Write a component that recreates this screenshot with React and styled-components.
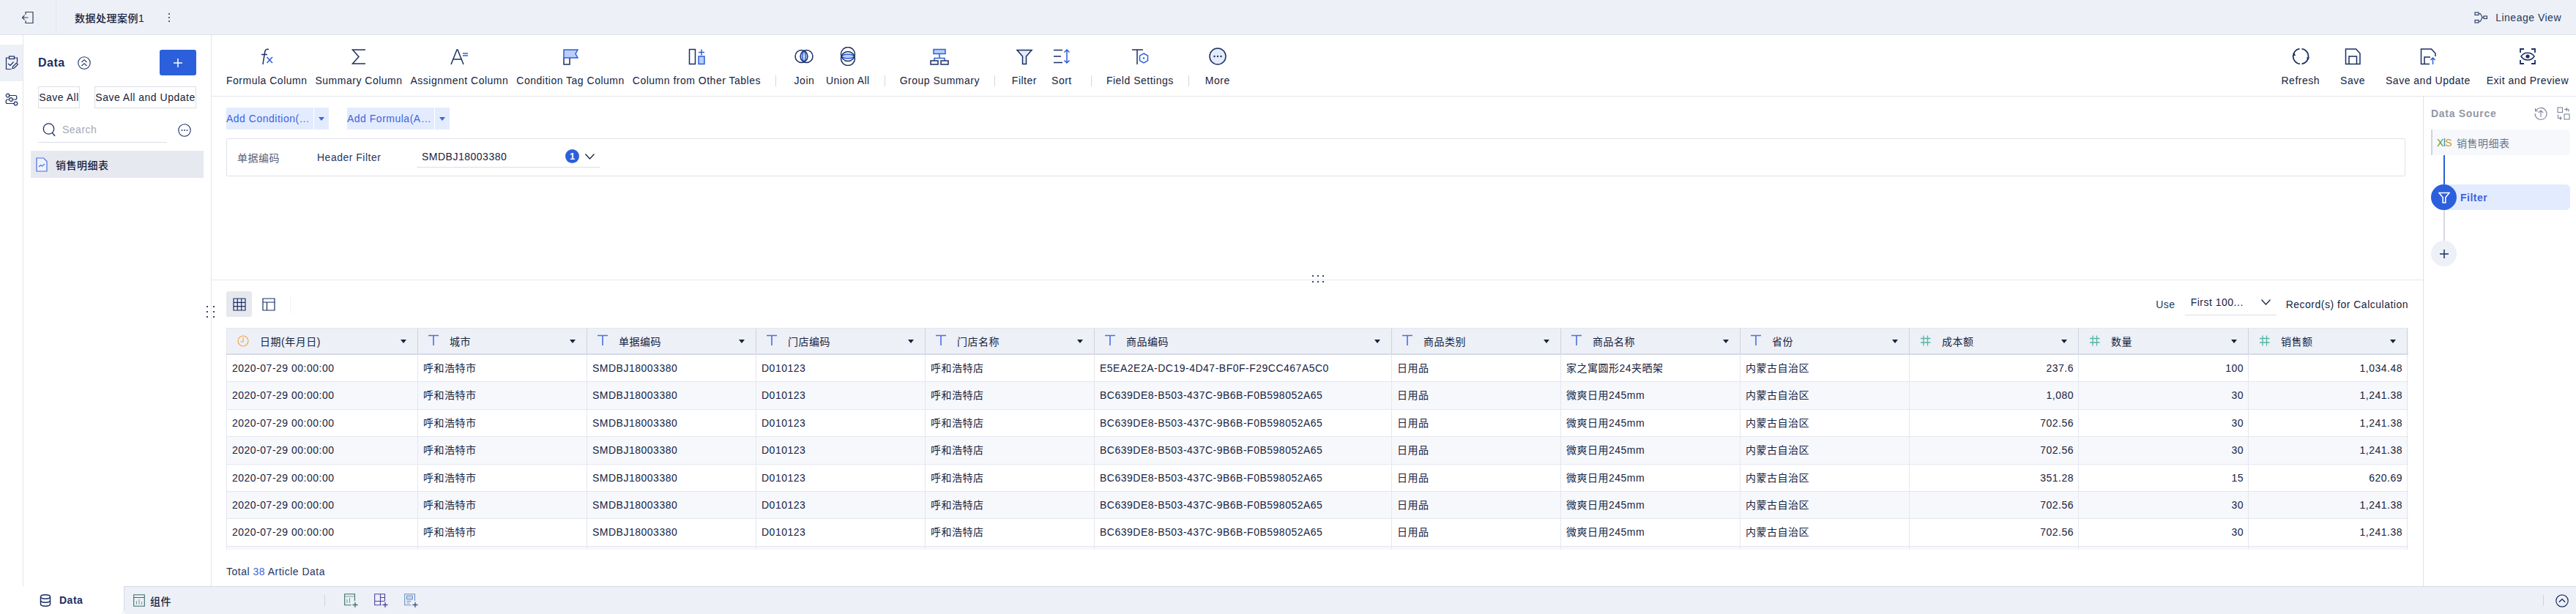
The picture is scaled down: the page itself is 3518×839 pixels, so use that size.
import { Fragment } from 'react';
import styled, { createGlobalStyle } from 'styled-components';

const NAVY = '#1b2f63';
const BLUE = '#2c5fdb';
const SOFT = '#b7cffb';
const PALE = '#e3ecfe';
const BAR = '#edf0f6';
const LINE = '#e2e5ec';
const GRID = '262px 231px 231px 231px 231px 406px 231px 245px 231px 231px 232px 217px';

const GlobalStyle = createGlobalStyle`
  html, body {
    margin: 0;
    padding: 0;
    background: #fff;
  }
  body {
    font-family: "Liberation Sans", "Noto Sans CJK SC", sans-serif;
    font-size: 14px;
    letter-spacing: 0.5px;
    color: #16233f;
  }
  * {
    box-sizing: border-box;
  }
`;

const Page = styled.div`
  display: flex;
  flex-direction: column;
  width: 3518px;
  height: 839px;
  overflow: hidden;
`;

const TopBar = styled.div`
  display: flex;
  align-items: center;
  flex: 0 0 48px;
  background: ${BAR};
  border-bottom: 1px solid #dfe2ea;
`;

const BackCell = styled.div`
  display: flex;
  align-items: center;
  justify-content: center;
  width: 77px;
  height: 47px;
  border-right: 1px solid #e2e5ec;
  color: #34425f;
`;

const Title = styled.div`
  margin-left: 25px;
  font-weight: 500;
`;

const Kebab = styled.div`
  margin-left: 32px;
  display: flex;
  color: #34425f;
`;

const Lineage = styled.div`
  display: flex;
  align-items: center;
  gap: 11px;
  margin-left: auto;
  margin-right: 20px;
  color: #25375f;
`;

const Main = styled.div`
  display: flex;
  flex: 1;
  min-height: 0;
`;

const Rail = styled.div`
  flex: 0 0 32px;
  border-right: 1px solid ${LINE};
  padding-top: 13px;
`;

const RailItem = styled.div`
  display: flex;
  align-items: center;
  justify-content: center;
  height: 50px;
  background: ${(props) => (props.$active ? BAR : '#fff')};
  color: ${NAVY};
`;

const DataPanel = styled.div`
  flex: 0 0 257px;
  border-right: 1px solid ${LINE};
  padding: 20px 20px 0;
`;

const PanelHead = styled.div`
  display: flex;
  align-items: center;
  height: 35px;
  color: ${NAVY};
`;

const PanelTitle = styled.div`
  font-size: 16px;
  font-weight: 700;
  margin-right: 17px;
`;

const PlusButton = styled.div`
  display: flex;
  align-items: center;
  justify-content: center;
  width: 50px;
  height: 35px;
  margin-left: auto;
  background: ${BLUE};
  border-radius: 3px;
  color: #fff;
`;

const SaveRow = styled.div`
  display: flex;
  justify-content: space-between;
  margin-top: 15px;
`;

const SaveButton = styled.div`
  display: flex;
  align-items: center;
  justify-content: center;
  width: ${(props) => props.$width}px;
  height: 30px;
  border: 1px solid #dcdfe7;
  white-space: nowrap;
`;

const SearchRow = styled.div`
  display: flex;
  align-items: center;
  justify-content: space-between;
  margin-top: 12px;
`;

const SearchBox = styled.div`
  display: flex;
  align-items: center;
  gap: 9px;
  width: 176px;
  height: 35px;
  padding-left: 6px;
  border-bottom: 1px solid #dcdfe7;
  color: #a3a9b8;
  svg {
    color: ${NAVY};
  }
`;

const RoundAction = styled.div`
  display: flex;
  margin-right: 7px;
  color: ${NAVY};
`;

const TableItem = styled.div`
  display: flex;
  align-items: center;
  gap: 11px;
  height: 37px;
  margin: 11px -10px 0;
  padding-left: 7px;
  background: #e6e9f0;
  font-weight: 500;
`;

const Content = styled.div`
  display: flex;
  flex-direction: column;
  flex: 1;
  min-width: 0;
`;

const Toolbar = styled.div`
  display: flex;
  flex: 0 0 84px;
  padding: 17px 10px 0 20px;
  border-bottom: 1px solid ${LINE};
`;

const ToolGroup = styled.div`
  display: flex;
  gap: ${(props) => props.$gap || 11}px;
`;

const ToolButton = styled.div`
  display: flex;
  flex-direction: column;
  align-items: center;
  min-width: ${(props) => props.$min || 0}px;
  white-space: nowrap;
`;

const IconSlot = styled.div`
  display: flex;
  align-items: center;
  justify-content: center;
  height: 24px;
  margin-bottom: 13px;
  color: ${NAVY};
`;

const ToolDivider = styled.div`
  flex: 0 0 1px;
  height: 15px;
  margin: 38px 20px 0;
  background: #d5d8e0;
`;

const RightTools = styled(ToolGroup)`
  margin-left: auto;
`;

const Workspace = styled.div`
  display: flex;
  flex: 1;
  min-height: 0;
`;

const Editor = styled.div`
  position: relative;
  display: flex;
  flex-direction: column;
  flex: 1;
  min-width: 0;
`;

const FilterArea = styled.div`
  position: relative;
  flex: 0 0 251px;
  padding: 15px 24px 0 20px;
  border-bottom: 1px solid #e6e8ef;
`;

const AddRow = styled.div`
  display: flex;
  gap: 25px;
`;

const AddButton = styled.div`
  display: flex;
  gap: 1px;
  height: 30px;
  color: #3d63dd;
`;

const AddLabel = styled.div`
  width: 119px;
  line-height: 30px;
  background: ${PALE};
  white-space: nowrap;
`;

const AddArrow = styled.div`
  display: flex;
  align-items: center;
  justify-content: center;
  width: 20px;
  background: ${PALE};
`;

const Caret = styled.span`
  display: inline-block;
  width: 0;
  height: 0;
  border-left: 4px solid transparent;
  border-right: 4px solid transparent;
  border-top: 5px solid ${(props) => props.$color || '#3d63dd'};
`;

const FilterBox = styled.div`
  display: flex;
  align-items: center;
  height: 52px;
  margin-top: 12px;
  padding-left: 14px;
  border: 1px solid #dfe2ea;
  border-radius: 2px;
`;

const FilterField = styled.div`
  width: 109px;
  color: #5a6378;
`;

const FilterOperator = styled.div`
  width: 136px;
  color: #25375f;
`;

const FilterSelect = styled.div`
  display: flex;
  align-items: center;
  width: 250px;
  height: 28px;
  padding: 0 6px 2px 7px;
  border-bottom: 1px solid #dcdfe7;
`;

const Badge = styled.div`
  display: flex;
  align-items: center;
  justify-content: center;
  width: 19px;
  height: 19px;
  margin-left: auto;
  margin-right: 7px;
  border-radius: 50%;
  background: ${BLUE};
  color: #fff;
  font-size: 13px;
  font-weight: 700;
  letter-spacing: 0;
`;

const Dots = styled.div`
  position: absolute;
  display: grid;
  grid-template-columns: repeat(${(props) => props.$cols}, 2px);
  column-gap: ${(props) => props.$colGap}px;
  row-gap: ${(props) => props.$rowGap}px;
  left: ${(props) => props.$left};
  top: ${(props) => props.$top}px;
  i {
    display: block;
    width: 2px;
    height: 2px;
    background: #33466f;
  }
`;

const TableArea = styled.div`
  flex: 1;
  padding: 15px 20px 0 20px;
  min-height: 0;
`;

const TableTools = styled.div`
  display: flex;
  align-items: center;
  height: 35px;
`;

const ViewButton = styled.div`
  display: flex;
  align-items: center;
  justify-content: center;
  width: 35px;
  height: 35px;
  margin-right: 5px;
  border-radius: 3px;
  background: ${(props) => (props.$active ? '#e6e8ee' : 'transparent')};
  color: ${NAVY};
`;

const ThinDivider = styled.div`
  width: 1px;
  height: 25px;
  margin-left: 7px;
  background: #eef0f4;
`;

const UseLabel = styled.div`
  margin-left: auto;
  color: #25375f;
`;

const UseSelect = styled.div`
  display: flex;
  align-items: center;
  justify-content: space-between;
  width: 125px;
  height: 31px;
  margin: 0 13px 0 13px;
  padding: 0 7px 4px 8px;
  border-bottom: 1px solid #dcdfe7;
`;

const TableWrap = styled.div`
  position: relative;
  height: 303px;
  margin-top: 15px;
  overflow: hidden;
`;

const HeadRow = styled.div`
  display: grid;
  grid-template-columns: ${GRID};
  height: 37px;
  background: ${BAR};
  border-top: 1px solid #e4e7ee;
  border-bottom: 2px solid #d6dae5;
`;

const HeadCell = styled.div`
  display: flex;
  align-items: center;
  gap: 15px;
  padding-left: 14px;
  border-left: ${(props) => (props.$first ? '1px solid #e4e7ee' : '0')};
  border-right: 1px solid #cfd3de;
  min-width: 0;
`;

const HeadCaret = styled.div`
  display: flex;
  margin-left: auto;
  margin-right: 15px;
`;

const Row = styled.div`
  display: grid;
  grid-template-columns: ${GRID};
  height: 37.4px;
  background: ${(props) => (props.$even ? '#f6f8fc' : '#fff')};
  border-bottom: 1px solid #e4e7ee;
`;

const Cell = styled.div`
  padding: 0 6px 0 7px;
  line-height: 36px;
  text-align: ${(props) => (props.$right ? 'right' : 'left')};
  border-left: ${(props) => (props.$first ? '1px solid #e4e7ee' : '0')};
  border-right: 1px solid #e4e7ee;
  white-space: nowrap;
`;

const ScrollThumb = styled.div`
  position: absolute;
  left: 2981px;
  top: 42px;
  width: 8px;
  height: 40px;
  border-radius: 4px;
  background: #eef0f4;
`;

const Total = styled.div`
  margin-top: 22px;
  color: #25375f;
  span {
    color: #3d63dd;
  }
`;

const SourcePanel = styled.div`
  display: flex;
  flex-direction: column;
  flex: 0 0 209px;
  padding: 0 8px 0 10px;
  border-left: 1px solid #dfe2ea;
`;

const SourceHead = styled.div`
  display: flex;
  align-items: center;
  gap: 13px;
  height: 45px;
  color: #7d8595;
`;

const SourceTitle = styled.div`
  flex: 1;
  font-weight: 700;
  letter-spacing: 0.7px;
  color: #9298a6;
`;

const SourceItem = styled.div`
  display: flex;
  align-items: center;
  gap: 7px;
  height: 35px;
  padding-left: 6px;
  background: #f6f8fc;
  border-left: 2px solid #d0d4de;
  border-radius: 0 6px 6px 0;
  color: #6b7489;
`;

const XlsMark = styled.span`
  font-size: 14px;
  letter-spacing: -0.6px;
  color: #5f9a2c;
  b {
    color: #2d8f8a;
    font-weight: 400;
  }
  em {
    color: #d6962a;
    font-style: normal;
  }
`;

const Connector = styled.div`
  flex: 0 0 ${(props) => props.$height}px;
  width: 1.5px;
  margin-left: 17px;
  background: ${(props) => props.$color};
`;

const StepItem = styled.div`
  display: flex;
  align-items: center;
  gap: 5px;
  height: 35px;
  background: ${PALE};
  border-radius: 18px 6px 6px 18px;
  color: #3d63dd;
  font-weight: 700;
`;

const StepCircle = styled.div`
  display: flex;
  align-items: center;
  justify-content: center;
  width: 35px;
  height: 35px;
  border-radius: 50%;
  background: ${BLUE};
  color: #fff;
`;

const AddStep = styled(StepCircle)`
  background: ${BAR};
  color: ${NAVY};
`;

const BottomBar = styled.div`
  display: flex;
  flex: 0 0 38px;
`;

const DataTab = styled.div`
  display: flex;
  align-items: center;
  gap: 11px;
  width: 170px;
  padding-left: 54px;
  border-right: 1px solid #d6d9e1;
  border-bottom-right-radius: 6px;
  font-weight: 700;
  color: ${NAVY};
`;

const BottomRest = styled.div`
  display: flex;
  align-items: center;
  flex: 1;
  padding-left: 12px;
  background: ${BAR};
  border-top: 1px solid #d6d9e1;
`;

const SheetTab = styled.div`
  display: flex;
  align-items: center;
  gap: 7px;
  width: 261px;
  font-weight: 500;
`;

const BarDivider = styled.div`
  width: 1px;
  height: 15px;
  background: #cfd3dc;
`;

const AddIcons = styled.div`
  display: flex;
  gap: 22px;
  margin-left: 26px;
`;

const Collapse = styled.div`
  display: flex;
  align-items: center;
  gap: 16px;
  margin-left: auto;
  margin-right: 10px;
  color: ${NAVY};
`;

const IconSvg = styled.svg`
  flex-shrink: 0;
  fill: none;
  stroke: currentColor;
  stroke-width: 1.5;
`;

const Svg = ({ w = 24, h = 24, children }) => (
  <IconSvg width={w} height={h} viewBox={`0 0 ${w} ${h}`}>
    {children}
  </IconSvg>
);

const blue = { stroke: BLUE };
const soft = { stroke: BLUE, fill: SOFT };

const FxIcon = () => (
  <Svg>
    <path d="M15 2.5c-3-.8-4.6.3-5.2 3L7 23M5 9.5h8" />
    <path d="M12.5 13l7.5 8M20 13l-7.5 8" {...blue} />
  </Svg>
);
const SigmaIcon = () => (
  <Svg>
    <path d="M21 3H3.5L12 12.5 3.5 22H21" />
  </Svg>
);
const AssignIcon = () => (
  <Svg>
    <path d="M1 23L9 3h1l8 20M4 16h12" />
    <path d="M17 8h7M17 11h7" {...blue} />
  </Svg>
);
const TagIcon = () => (
  <Svg>
    <path d="M3 14v9h8v-9" />
    <path d="M3 3h19l-3 5.5 3 5.5H3z" {...soft} />
  </Svg>
);
const OtherTableIcon = () => (
  <Svg>
    <rect x="2.5" y="2.5" width="8" height="20" />
    <rect x="15" y="12" width="8" height="10.5" {...soft} />
    <path d="M15 6.5h8M19 2.5v8" {...blue} />
  </Svg>
);
const JoinIcon = () => (
  <Svg w={26}>
    <path d="M13 4.5c3.6 4 3.6 11 0 15-3.6-4-3.6-11 0-15z" fill={SOFT} stroke={BLUE} />
    <circle cx="9.5" cy="12" r="8.5" />
    <circle cx="16.5" cy="12" r="8.5" />
  </Svg>
);
const UnionIcon = () => (
  <Svg h={26}>
    <path d="M3 13c4-4 14-4 18 0-4 4-14 4-18 0z" fill={SOFT} stroke={BLUE} />
    <circle cx="12" cy="10" r="9.5" />
    <circle cx="12" cy="16" r="9.5" />
  </Svg>
);
const GroupIcon = () => (
  <Svg w={26}>
    <rect x="5" y="2.5" width="16" height="6" {...soft} />
    <path d="M13 8.5v6M6 18v-3.5h14V18" {...blue} />
    <rect x="1" y="18" width="10" height="5" />
    <rect x="15" y="18" width="10" height="5" />
  </Svg>
);
const FilterIcon = () => (
  <Svg>
    <path d="M2 3.5h20l-7.5 8.5v10.5h-5V12z" fill={PALE} />
  </Svg>
);
const SortIcon = () => (
  <Svg>
    <path d="M1 3.5h12M1 12h10M1 20.5h12" />
    <path d="M19 3v18M15.5 6.5L19 3l3.5 3.5M15.5 17.5L19 21l3.5-3.5" {...blue} />
  </Svg>
);
const FieldIcon = () => (
  <Svg>
    <path d="M1 3h15M8 3v20" />
    <path d="M17 8l5.5 3.2v6.6L17 21l-5.5-3.2v-6.6z" {...blue} />
    <circle cx="17" cy="14.5" r="1.2" fill={BLUE} stroke="none" />
  </Svg>
);
const MoreIcon = () => (
  <Svg>
    <circle cx="12" cy="12" r="11" fill={PALE} />
    <g fill={NAVY} stroke="none">
      <circle cx="7.5" cy="12" r="1.2" />
      <circle cx="12" cy="12" r="1.2" />
      <circle cx="16.5" cy="12" r="1.2" />
    </g>
  </Svg>
);
const RefreshIcon = () => (
  <Svg>
    <path d="M10.5 1.6A10.5 10.5 0 0 0 11 22.4" strokeWidth="1.8" />
    <path d="M13.5 1.6A10.5 10.5 0 0 1 13.5 22.4" strokeWidth="1.8" />
    <path d="M19.8 13.5h4.4L22 17zM.8 11h4.4L3 7z" fill={NAVY} stroke="none" />
  </Svg>
);
const SaveIcon = () => (
  <Svg>
    <path d="M2.5 2h14l5.5 6v14.5H2.5z" />
    <path d="M7 22.5V12h10.5v10.5" />
  </Svg>
);
const SaveUpdateIcon = () => (
  <Svg>
    <path d="M14 22.5H2.5V2h14l5.5 6v4" />
    <path d="M7 22.5V13h8" />
    <path d="M18.5 23v-9M15.5 17l3-3 3 3" {...blue} />
  </Svg>
);
const PreviewIcon = () => (
  <Svg>
    <path d="M2 7V2h5M17 2h5v5M22 17v5h-5M7 22H2v-5" strokeWidth="1.8" />
    <path d="M3 12c4-6.5 14-6.5 18 0-4 6.5-14 6.5-18 0z" />
    <circle cx="12" cy="12" r="2.6" fill={NAVY} stroke="none" />
  </Svg>
);
const BackIcon = () => (
  <Svg w={18} h={18}>
    <path d="M6 5V1.5h10v15H6V13M9.5 9H1.5M4.5 6l-3 3 3 3" strokeWidth="1.2" />
  </Svg>
);
const KebabIcon = () => (
  <Svg w={4} h={14}>
    <g fill="currentColor" stroke="none">
      <circle cx="2" cy="2" r="1.1" />
      <circle cx="2" cy="7" r="1.1" />
      <circle cx="2" cy="12" r="1.1" />
    </g>
  </Svg>
);
const LineageIcon = () => (
  <Svg w={18} h={16}>
    <rect x="1" y="1" width="5" height="3.5" strokeWidth="1.1" />
    <rect x="1" y="11.5" width="5" height="3.5" strokeWidth="1.1" />
    <rect x="13" y="6" width="4.5" height="3.5" strokeWidth="1.1" />
    <path d="M6 2.7h2.5L11 7.7h2M6 13.3h2.5L11 7.7" strokeWidth="1.1" />
  </Svg>
);
const BoardIcon = () => (
  <Svg w={18} h={20}>
    <path d="M5.5 3H1.5v15.5h7M12.5 3h4v6.5" strokeWidth="1.2" />
    <rect x="5.5" y="1" width="7" height="3.5" strokeWidth="1.2" />
    <path d="M4 11l3 2.5 4.5-5M10 17.5l.5-2.5 5-5 2 2-5 5z" strokeWidth="1.2" />
  </Svg>
);
const FlowIcon = () => (
  <Svg w={18} h={18}>
    <circle cx="3.5" cy="3.5" r="2.3" strokeWidth="1.2" />
    <circle cx="14.5" cy="14.5" r="2.3" strokeWidth="1.2" />
    <circle cx="8" cy="9" r="2.3" strokeWidth="1.2" />
    <path d="M6 3.5h8c2.5 0 2.5 5.5 0 5.5h-3.5M5.5 9H3c-2.5 0-2.5 5.5 0 5.5h9" strokeWidth="1.2" />
  </Svg>
);
const DoubleUpIcon = () => (
  <Svg w={18} h={18}>
    <circle cx="9" cy="9" r="8.2" strokeWidth="1.1" />
    <path d="M5.5 8L9 4.7 12.5 8M5.5 13L9 9.7l3.5 3.3" strokeWidth="1.1" />
  </Svg>
);
const PlusIcon = () => (
  <Svg w={14} h={14}>
    <path d="M7 1v12M1 7h12" strokeWidth="1.5" />
  </Svg>
);
const SearchIcon = () => (
  <Svg w={18} h={20}>
    <circle cx="8.5" cy="9" r="7.2" strokeWidth="1.3" />
    <path d="M13.5 14.5L17 19" strokeWidth="1.3" />
  </Svg>
);
const DotsCircleIcon = () => (
  <Svg w={18} h={18}>
    <circle cx="9" cy="9" r="8.2" strokeWidth="1.1" />
    <g fill="currentColor" stroke="none">
      <circle cx="5.5" cy="9" r=".9" />
      <circle cx="9" cy="9" r=".9" />
      <circle cx="12.5" cy="9" r=".9" />
    </g>
  </Svg>
);
const DocIcon = () => (
  <Svg w={16} h={20}>
    <path d="M1 1h9.5L15 5.5V19H1z" fill="#eef3ff" stroke="#4a6fe3" strokeWidth="1.2" />
    <path d="M4 13l2.5-2.5 2 1.5L12 9" stroke="#4a6fe3" strokeWidth="1.1" />
  </Svg>
);
const Chevron = () => (
  <Svg w={15} h={10}>
    <path d="M1.5 1.5L7.5 8l6-6.5" strokeWidth="1.3" />
  </Svg>
);
const GridIcon = () => (
  <Svg w={18} h={18}>
    <path d="M1 1h16v16H1zM6.3 1v16M11.7 1v16M1 6.3h16M1 11.7h16" strokeWidth="1.2" />
  </Svg>
);
const PivotIcon = () => (
  <Svg w={18} h={18}>
    <path d="M1 1h16v16H1zM1 6h16M6.5 6v11" strokeWidth="1.2" />
  </Svg>
);
const ClockIcon = () => (
  <Svg w={16} h={18}>
    <circle cx="8" cy="9" r="7" stroke="#f2a54a" strokeWidth="1.2" />
    <path d="M8 4.5V10H4.5" stroke="#f2a54a" strokeWidth="1.2" />
  </Svg>
);
const TextIcon = () => (
  <Svg w={14} h={18}>
    <path d="M0 1.5h14M7 1.5V15" stroke="#4a6fe3" strokeWidth="1.6" />
  </Svg>
);
const NumberIcon = () => (
  <Svg w={15} h={18}>
    <path d="M5 1.5v14M10.5 1.5v14M1 5.5h13.5M1 11h13.5" stroke="#55b5a6" strokeWidth="1.3" />
  </Svg>
);
const HistoryIcon = () => (
  <Svg w={18} h={18}>
    <path d="M2 5.5A8 8 0 1 1 1 9M1.5 2v3.7h3.7" strokeWidth="1.1" />
    <path d="M9 14V5M5.8 8L9 5l3.2 3" strokeWidth="1.1" />
  </Svg>
);
const SwapIcon = () => (
  <Svg w={18} h={18}>
    <rect x="1" y="1" width="6.5" height="6.5" strokeWidth="1.1" />
    <rect x="10" y="10" width="7" height="7" strokeWidth="1.1" />
    <path d="M10 3.5h6v3M14 1.5l-2 2 2 2M1.5 10.5v5h4.5M4 13.5l2 2-2 2" strokeWidth="1.1" />
  </Svg>
);
const WhiteFilterIcon = () => (
  <Svg w={16} h={16}>
    <path d="M1 1.5h14L9.8 7.7V15H6.2V7.7z" strokeWidth="1.6" />
  </Svg>
);
const DatabaseIcon = () => (
  <Svg w={16} h={17}>
    <ellipse cx="8" cy="3.5" rx="6.5" ry="2.7" />
    <path d="M1.5 3.5v10c0 3.6 13 3.6 13 0v-10M1.5 8.5c0 3.6 13 3.6 13 0" />
  </Svg>
);
const SheetIcon = () => (
  <Svg w={16} h={17}>
    <path d="M.7.7h14.6v15.6H.7zM.7 4.5h14.6" stroke="#3c6e6b" strokeWidth="1.1" />
    <path d="M4.5 14V9M8 14V7M11.5 14v-4" stroke="#6aa6a0" strokeWidth="1.1" />
  </Svg>
);
const AddChartIcon = () => (
  <Svg w={19} h={19}>
    <path d="M14.5 10V.7H.7v15h9" stroke="#3c6e6b" strokeWidth="1.1" />
    <path d="M.7 4h13.8M4 13V8M7.5 13V6" stroke="#6aa6a0" strokeWidth="1.1" />
    <path d="M15 12v7M11.5 15.5h7" stroke="#3c6e6b" strokeWidth="1.3" />
  </Svg>
);
const AddCrossIcon = () => (
  <Svg w={19} h={19}>
    <path d="M14.5 10V.7H.7v15h9M.7 10.5h13.8M8.5.7v15M8.5 5.5h6" stroke="#5040a8" strokeWidth="1.1" />
    <path d="M15 12v7M11.5 15.5h7" stroke="#5040a8" strokeWidth="1.3" />
  </Svg>
);
const AddReportIcon = () => (
  <Svg w={19} h={19}>
    <path d="M14.5 10V.7H.7v15h9" stroke="#6f8fc4" strokeWidth="1.1" />
    <path d="M3.5 3h8v5h-8z" fill="#c6d6f1" stroke="#6f8fc4" strokeWidth="1" />
    <path d="M3.5 10.5h6M3.5 13h4" stroke="#6f8fc4" strokeWidth="1.1" />
    <path d="M15 12v7M11.5 15.5h7" stroke="#32558f" strokeWidth="1.3" />
  </Svg>
);
const UpCircleIcon = () => (
  <Svg w={18} h={18}>
    <circle cx="9" cy="9" r="8.2" strokeWidth="1.2" />
    <path d="M4.8 10.8L9 6.8l4.2 4" strokeWidth="1.4" />
  </Svg>
);

const mainTools = [
  [
    { label: 'Formula Column', icon: <FxIcon /> },
    { label: 'Summary Column', icon: <SigmaIcon /> },
    { label: 'Assignment Column', icon: <AssignIcon /> },
    { label: 'Condition Tag Column', icon: <TagIcon /> },
    { label: 'Column from Other Tables', icon: <OtherTableIcon /> },
  ],
  [
    { label: 'Join', icon: <JoinIcon />, min: 37 },
    { label: 'Union All', icon: <UnionIcon /> },
  ],
  [{ label: 'Group Summary', icon: <GroupIcon /> }],
  [
    { label: 'Filter', icon: <FilterIcon />, min: 40 },
    { label: 'Sort', icon: <SortIcon />, min: 40 },
  ],
  [{ label: 'Field Settings', icon: <FieldIcon /> }],
  [{ label: 'More', icon: <MoreIcon />, min: 38 }],
];

const saveTools = [
  { label: 'Refresh', icon: <RefreshIcon /> },
  { label: 'Save', icon: <SaveIcon />, min: 46 },
  { label: 'Save and Update', icon: <SaveUpdateIcon /> },
  { label: 'Exit and Preview', icon: <PreviewIcon /> },
];

const columns = [
  { name: '日期(年月日)', icon: <ClockIcon /> },
  { name: '城市', icon: <TextIcon /> },
  { name: '单据编码', icon: <TextIcon /> },
  { name: '门店编码', icon: <TextIcon /> },
  { name: '门店名称', icon: <TextIcon /> },
  { name: '商品编码', icon: <TextIcon /> },
  { name: '商品类别', icon: <TextIcon /> },
  { name: '商品名称', icon: <TextIcon /> },
  { name: '省份', icon: <TextIcon /> },
  { name: '成本额', icon: <NumberIcon /> },
  { name: '数量', icon: <NumberIcon /> },
  { name: '销售额', icon: <NumberIcon /> },
];

const CODE_A = 'E5EA2E2A-DC19-4D47-BF0F-F29CC467A5C0';
const CODE_B = 'BC639DE8-B503-437C-9B6B-F0B598052A65';

const rows = [
  [CODE_A, '家之寓圆形24夹晒架', '237.6', '100', '1,034.48'],
  [CODE_B, '微爽日用245mm', '1,080', '30', '1,241.38'],
  [CODE_B, '微爽日用245mm', '702.56', '30', '1,241.38'],
  [CODE_B, '微爽日用245mm', '702.56', '30', '1,241.38'],
  [CODE_B, '微爽日用245mm', '351.28', '15', '620.69'],
  [CODE_B, '微爽日用245mm', '702.56', '30', '1,241.38'],
  [CODE_B, '微爽日用245mm', '702.56', '30', '1,241.38'],
];

function Tool({ item }) {
  return (
    <ToolButton $min={item.min}>
      <IconSlot>{item.icon}</IconSlot>
      {item.label}
    </ToolButton>
  );
}

function DotGrid({ count, ...rest }) {
  return (
    <Dots {...rest}>
      {Array.from({ length: count }, (_, i) => (
        <i key={i} />
      ))}
    </Dots>
  );
}

export default function App() {
  return (
    <Page>
      <GlobalStyle />
      <TopBar>
        <BackCell>
          <BackIcon />
        </BackCell>
        <Title>数据处理案例1</Title>
        <Kebab>
          <KebabIcon />
        </Kebab>
        <Lineage>
          <LineageIcon />
          Lineage View
        </Lineage>
      </TopBar>

      <Main>
        <Rail>
          <RailItem $active>
            <BoardIcon />
          </RailItem>
          <RailItem>
            <FlowIcon />
          </RailItem>
        </Rail>

        <DataPanel>
          <PanelHead>
            <PanelTitle>Data</PanelTitle>
            <DoubleUpIcon />
            <PlusButton>
              <PlusIcon />
            </PlusButton>
          </PanelHead>
          <SaveRow>
            <SaveButton $width={57}>Save All</SaveButton>
            <SaveButton $width={139}>Save All and Update</SaveButton>
          </SaveRow>
          <SearchRow>
            <SearchBox>
              <SearchIcon />
              Search
            </SearchBox>
            <RoundAction>
              <DotsCircleIcon />
            </RoundAction>
          </SearchRow>
          <TableItem>
            <DocIcon />
            销售明细表
          </TableItem>
        </DataPanel>

        <Content>
          <Toolbar>
            {mainTools.map((group, i) => (
              <Fragment key={group[0].label}>
                {i > 0 && <ToolDivider />}
                <ToolGroup>
                  {group.map((item) => (
                    <Tool key={item.label} item={item} />
                  ))}
                </ToolGroup>
              </Fragment>
            ))}
            <RightTools $gap={22}>
              {saveTools.map((item) => (
                <Tool key={item.label} item={item} />
              ))}
            </RightTools>
          </Toolbar>

          <Workspace>
            <Editor>
              <FilterArea>
                <AddRow>
                  <AddButton>
                    <AddLabel>Add Condition(…</AddLabel>
                    <AddArrow>
                      <Caret />
                    </AddArrow>
                  </AddButton>
                  <AddButton>
                    <AddLabel>Add Formula(A…</AddLabel>
                    <AddArrow>
                      <Caret />
                    </AddArrow>
                  </AddButton>
                </AddRow>
                <FilterBox>
                  <FilterField>单据编码</FilterField>
                  <FilterOperator>Header Filter</FilterOperator>
                  <FilterSelect>
                    SMDBJ18003380
                    <Badge>1</Badge>
                    <Chevron />
                  </FilterSelect>
                </FilterBox>
                <DotGrid count={6} $cols={3} $colGap={5} $rowGap={6} $left="1503px" $top={244} />
              </FilterArea>

              <TableArea>
                <TableTools>
                  <ViewButton $active>
                    <GridIcon />
                  </ViewButton>
                  <ViewButton>
                    <PivotIcon />
                  </ViewButton>
                  <ThinDivider />
                  <UseLabel>Use</UseLabel>
                  <UseSelect>
                    First 100...
                    <Chevron />
                  </UseSelect>
                  Record(s) for Calculation
                </TableTools>
                <TableWrap>
                  <HeadRow>
                    {columns.map((col, i) => (
                      <HeadCell key={col.name} $first={i === 0}>
                        {col.icon}
                        {col.name}
                        <HeadCaret>
                          <Caret $color="#16233f" />
                        </HeadCaret>
                      </HeadCell>
                    ))}
                  </HeadRow>
                  {rows.map((row, i) => (
                    <Row key={i} $even={i % 2 === 1}>
                      <Cell $first>2020-07-29 00:00:00</Cell>
                      <Cell>呼和浩特市</Cell>
                      <Cell>SMDBJ18003380</Cell>
                      <Cell>D010123</Cell>
                      <Cell>呼和浩特店</Cell>
                      <Cell>{row[0]}</Cell>
                      <Cell>日用品</Cell>
                      <Cell>{row[1]}</Cell>
                      <Cell>内蒙古自治区</Cell>
                      <Cell $right>{row[2]}</Cell>
                      <Cell $right>{row[3]}</Cell>
                      <Cell $right>{row[4]}</Cell>
                    </Row>
                  ))}
                  <Row $even>
                    {columns.map((col, i) => (
                      <Cell key={col.name} $first={i === 0} />
                    ))}
                  </Row>
                  <ScrollThumb />
                </TableWrap>
                <Total>
                  Total <span>38</span> Article Data
                </Total>
              </TableArea>
              <DotGrid count={6} $cols={2} $colGap={7} $rowGap={5} $left="-7px" $top={286} />
            </Editor>

            <SourcePanel>
              <SourceHead>
                <SourceTitle>Data Source</SourceTitle>
                <HistoryIcon />
                <SwapIcon />
              </SourceHead>
              <SourceItem>
                <XlsMark>
                  X<b>l</b>
                  <em>S</em>
                </XlsMark>
                销售明细表
              </SourceItem>
              <Connector $height={40} $color={BLUE} />
              <StepItem>
                <StepCircle>
                  <WhiteFilterIcon />
                </StepCircle>
                Filter
              </StepItem>
              <Connector $height={42} $color="#d5d8e0" />
              <AddStep>
                <PlusIcon />
              </AddStep>
            </SourcePanel>
          </Workspace>
        </Content>
      </Main>

      <BottomBar>
        <DataTab>
          <DatabaseIcon />
          Data
        </DataTab>
        <BottomRest>
          <SheetTab>
            <SheetIcon />
            组件
          </SheetTab>
          <BarDivider />
          <AddIcons>
            <AddChartIcon />
            <AddCrossIcon />
            <AddReportIcon />
          </AddIcons>
          <Collapse>
            <BarDivider />
            <UpCircleIcon />
          </Collapse>
        </BottomRest>
      </BottomBar>
    </Page>
  );
}
